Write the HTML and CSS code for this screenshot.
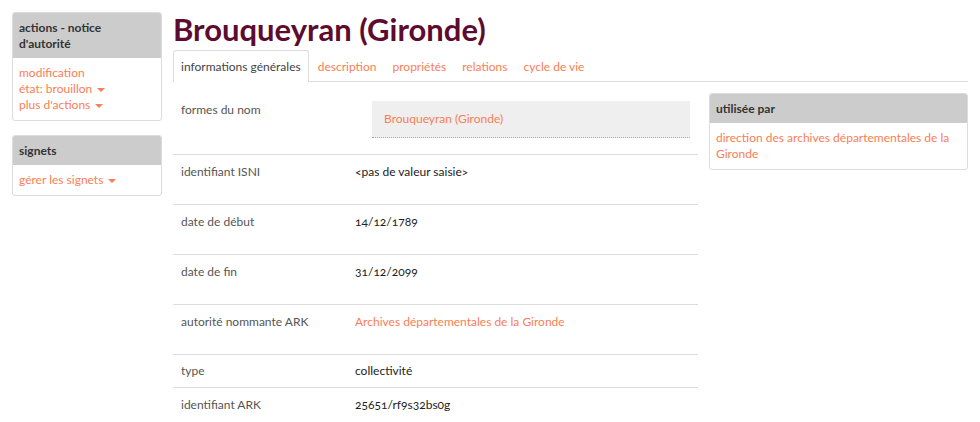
FILE: index.html
```html
<!DOCTYPE html>
<html lang="fr">
<head>
<meta charset="utf-8">
<title>Brouqueyran (Gironde)</title>
<link rel="stylesheet" href="styles.css">
</head>
<body>
<div class="page">
  <aside class="sidebar">
    <section class="box">
      <header class="box-head">actions - notice d'autorité</header>
      <div class="box-body">
        <a class="link">modification</a>
        <a class="link">état: brouillon <span class="caret"></span></a>
        <a class="link">plus d'actions <span class="caret"></span></a>
      </div>
    </section>
    <section class="box">
      <header class="box-head">signets</header>
      <div class="box-body">
        <a class="link">gérer les signets <span class="caret"></span></a>
      </div>
    </section>
  </aside>
  <main class="main">
    <h1 class="title">Brouqueyran (Gironde)</h1>
    <nav class="tabs">
      <span class="tab active">informations générales</span>
      <a class="tab">description</a>
      <a class="tab">propriétés</a>
      <a class="tab">relations</a>
      <a class="tab">cycle de vie</a>
    </nav>
    <div class="content">
      <table class="props">
        <tr>
          <th>formes du nom</th>
          <td><div class="nameform"><a class="link">Brouqueyran (Gironde)</a></div></td>
        </tr>
        <tr class="tall">
          <th>identifiant ISNI</th>
          <td>&lt;pas de valeur saisie&gt;</td>
        </tr>
        <tr class="tall">
          <th>date de début</th>
          <td>14/12/1789</td>
        </tr>
        <tr class="tall">
          <th>date de fin</th>
          <td>31/12/2099</td>
        </tr>
        <tr class="tall">
          <th>autorité nommante ARK</th>
          <td><a class="link">Archives départementales de la Gironde</a></td>
        </tr>
        <tr class="short">
          <th>type</th>
          <td>collectivité</td>
        </tr>
        <tr class="last">
          <th>identifiant ARK</th>
          <td>25651/rf9s32bs0g</td>
        </tr>
      </table>
      <section class="box side">
        <header class="box-head">utilisée par</header>
        <div class="box-body">
          <a class="link">direction des archives départementales de la Gironde</a>
        </div>
      </section>
    </div>
  </main>
</div>
</body>
</html>
```
FILE: styles.css
```css
* { box-sizing: border-box; }
html, body { margin: 0; padding: 0; background: #fff; }
body {
  font-family: Lato, "Open Sans", sans-serif;
  font-size: 12px;
  line-height: 16px;
  color: #222;
  font-variant-numeric: oldstyle-nums;
}
.page {
  display: grid;
  grid-template-columns: 150px 1fr;
  column-gap: 11px;
  padding: 12px 12px 0 12px;
}
.sidebar { display: flex; flex-direction: column; gap: 14px; }
.box {
  border: 1px solid #dcdcdc;
  border-radius: 3px;
  background: #fff;
  overflow: hidden;
}
.box-head {
  background: #cccccc;
  color: #333;
  font-weight: bold;
  padding: 7px 6px 6px 6px;
}
.box-body {
  padding: 7px 6px 7px 6px;
  display: flex;
  flex-direction: column;
}
.link { color: #fb7d55; text-decoration: none; }
.caret {
  display: inline-block;
  width: 0; height: 0;
  border-left: 4px solid transparent;
  border-right: 4px solid transparent;
  border-top: 4px solid #fb7d55;
  vertical-align: middle;
  margin-left: 2px;
}
.main { min-width: 0; }
.title {
  margin: 0;
  font-size: 31px;
  line-height: 34px;
  font-weight: bold;
  color: #5e0b30;
}
.tabs {
  display: flex;
  margin-top: 4px;
  border-bottom: 1px solid #dddddd;
  height: 32px;
  align-items: stretch;
}
.tab {
  padding: 8px 7px 0 7px;
  margin-right: 0;
  color: #fb7d55;
  border: 1px solid transparent;
  border-bottom: none;
}
.tab.active {
  color: #444;
  border-color: #dddddd;
  border-radius: 3px 3px 0 0;
  background: #fff;
  margin-bottom: -1px;
  margin-right: 1px;
}
.content {
  display: flex;
  gap: 11px;
  margin-top: 11px;
  align-items: flex-start;
}
.props {
  width: 525px;
  flex: none;
  border-collapse: collapse;
}
.props th, .props td {
  padding: 9px 8px;
  vertical-align: top;
  text-align: left;
  border-bottom: 1px solid #dddddd;
}
.props th {
  font-weight: normal;
  color: #555;
  width: 174px;
}
.props tr.tall th, .props tr.tall td { padding-bottom: 24px; }
.props tr.short th, .props tr.short td { padding: 8px 8px 8px 8px; }
.props tr.last th, .props tr.last td { border-bottom: none; }
.nameform {
  background: #efefef;
  border-bottom: 1px dotted #aaa;
  margin: -1px 0 7px 17px;
  padding: 10px 12px;
}
.side { flex: 1; }
```
